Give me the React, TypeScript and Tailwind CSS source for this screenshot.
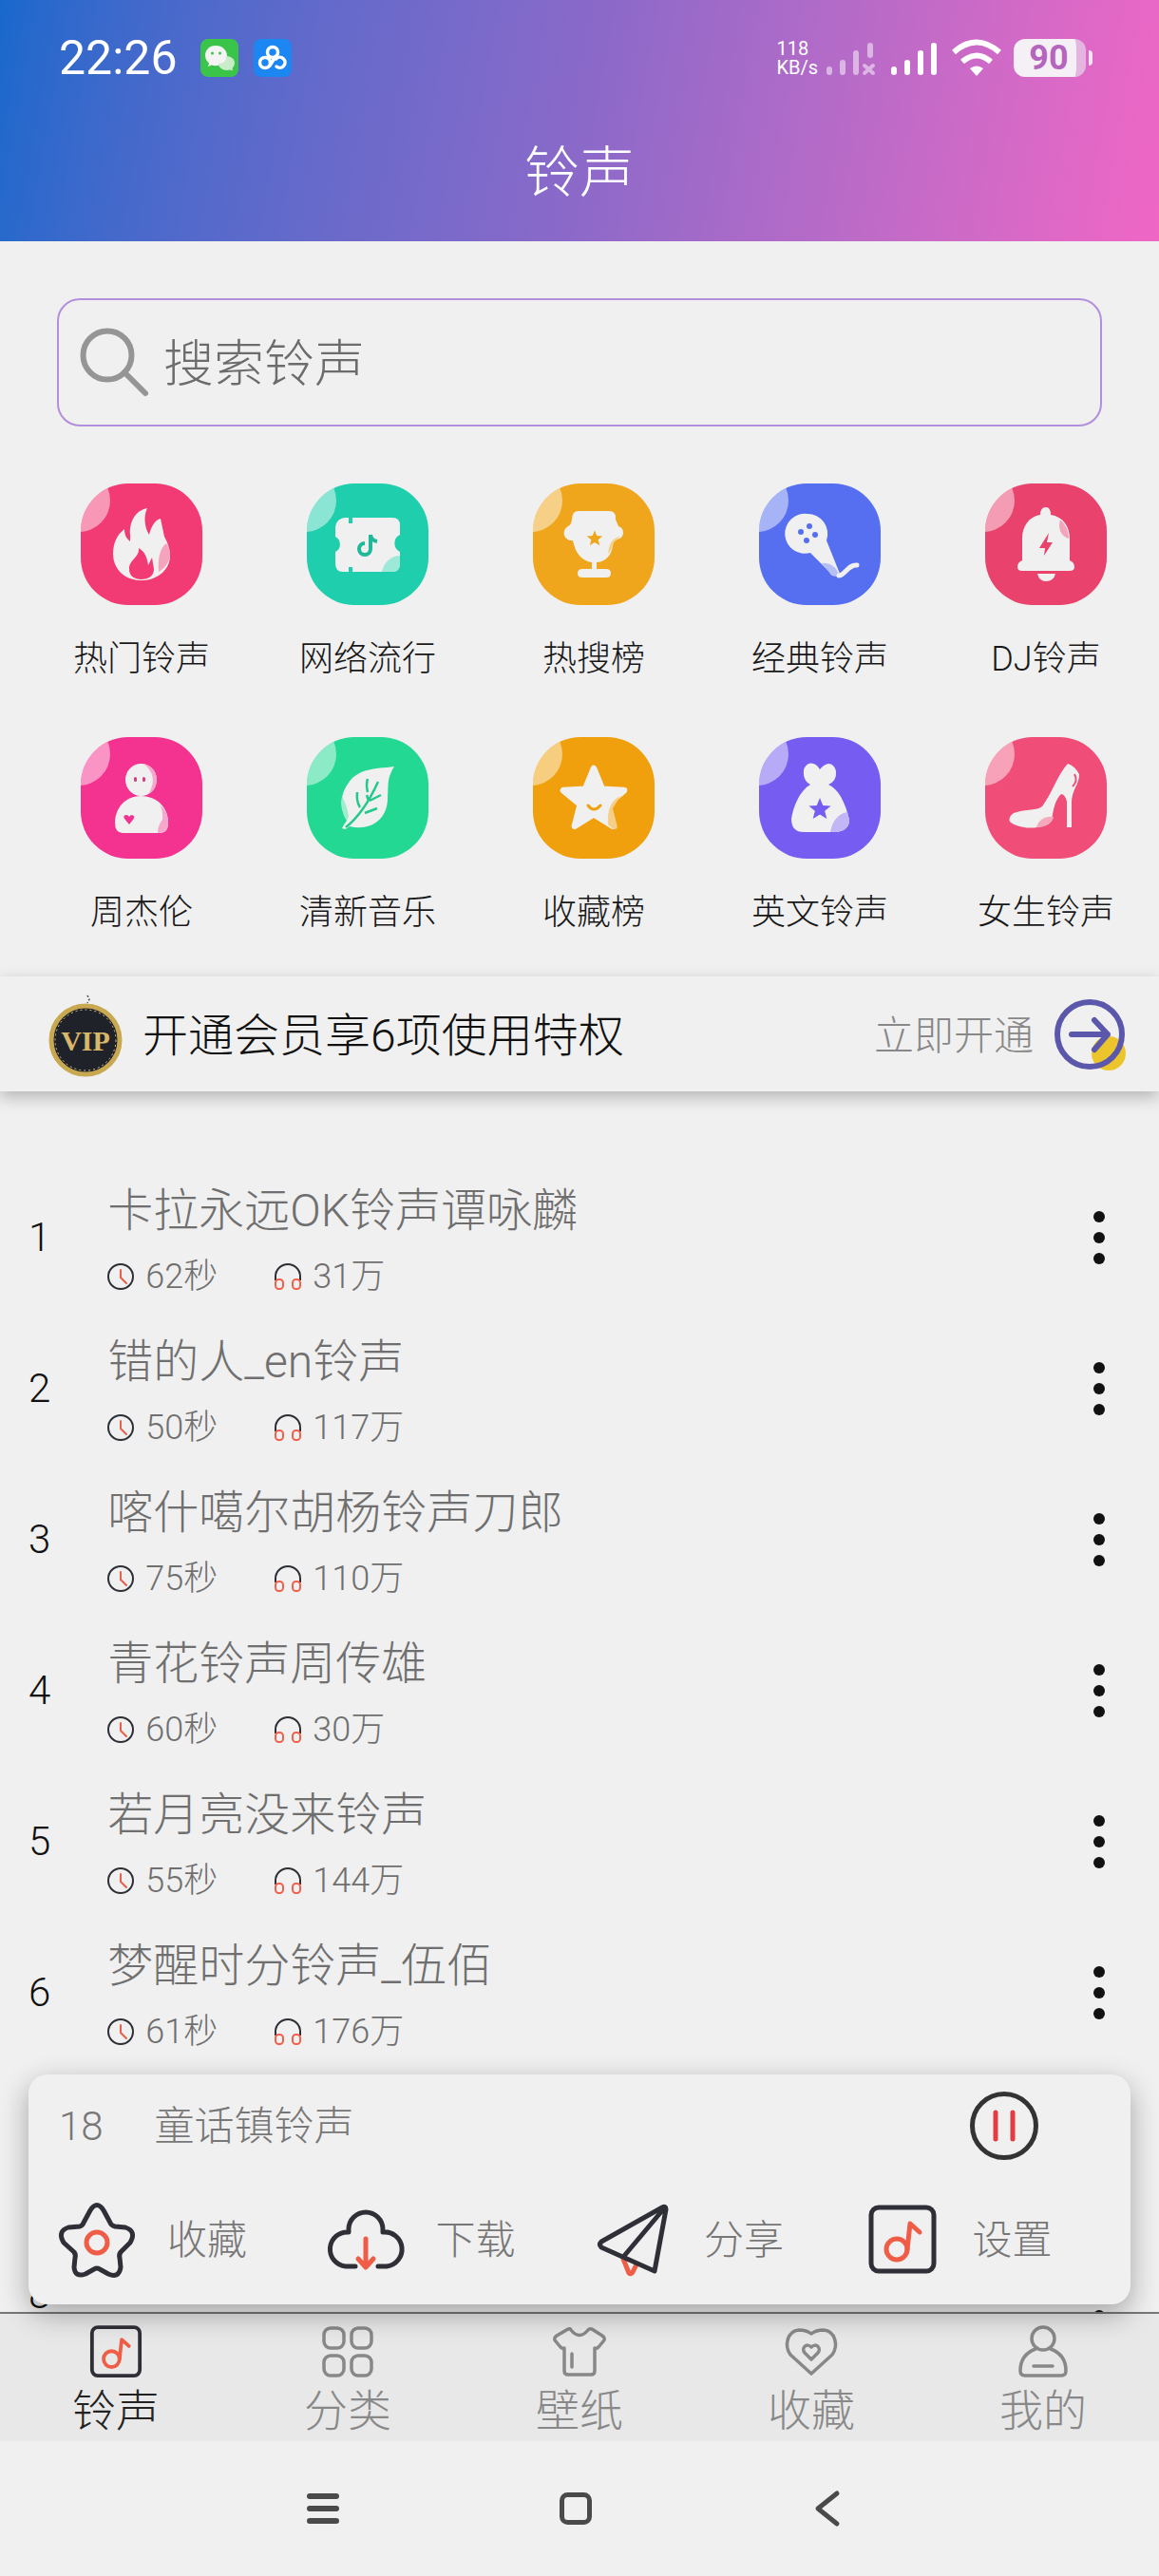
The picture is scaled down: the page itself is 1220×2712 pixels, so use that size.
import type { ReactNode } from "react";

type Category = {
  name: string;
  tile: string;
  art: ReactNode;
};

type Song = {
  id: number;
  title?: string;
  seconds?: string;
  plays?: string;
};

const FIVE_STAR =
  "M0 -10L2.7 -3.4L9.7 -3L4.3 1.5L6.1 8.4L0 4.6L-6.1 8.4L-4.3 1.5L-9.7 -3L-2.7 -3.4Z";

const categories: Category[] = [
  {
    name: "热门铃声",
    tile: "bg-[#f23a74]",
    art: (
      <>
        <path d="M70 26C58 28 51 40 52 54L52 61C48 58 46 54 46 48C38 54 34 63 34 74C34 88 44 101 62 102H66C82 101 94 90 94 76C94 70 92 63 88 56L84 37C78 38 74 46 72 54C67 46 66 34 70 26Z" fill="#f0f0f0" />
        <path d="M90 63C83 68 81 80 82 93C90 88 94 81 94 74C94 70 92 66 90 63Z" fill="#f6a3bd" />
        <path d="M61 68C62 78 51 80 51 90C51 96 54 100 63 101C72 101 77 97 77 90L75 78L71 86C70 79 68 72 61 68Z" fill="#f23a74" />
      </>
    ),
  },
  {
    name: "网络流行",
    tile: "bg-[#1fceac]",
    art: (
      <>
        <path d="M40 36H44V42H48V36H90Q98 36 98 44V54A10 10 0 0 0 98 72V84Q98 93 90 93H48V88H44V93H38Q30 93 30 84V72A9 9 0 0 0 30 56V46Q31 37 40 36Z" fill="#f0f0f0" />
        <path d="M98 76C90 76 81 82 79 93H90Q98 93 98 84Z" fill="#9ee8d8" />
        <path d="M67 54V69A6 6 0 1 1 61 63M67 54Q68 60 74 61" fill="none" stroke="#1fb898" strokeWidth="4" />
      </>
    ),
  },
  {
    name: "热搜榜",
    tile: "bg-[#f0a61c]",
    art: (
      <>
        <path d="M48 29H80Q88 29 87 38L90 45A7 7 0 0 1 91 58Q84 60 84 66C82 78 74 83 67 83V90H77Q82 90 82 94.500Q82 99 77 99H52Q47 99 47 94.500Q47 90 52 90H62V83C54 82 46 76 43 64L42 60A8 8 0 0 1 37 45Q40 44 41 38Q41 29 48 29Z" fill="#f0f0f0" />
        <path d="M92 56C84 57 80 63 79 74Q84 69 84 64Q86 60 92 56Z" fill="#f6d08a" />
        <path d={FIVE_STAR} transform="translate(65 58) scale(.85)" fill="#f0a61c" />
      </>
    ),
  },
  {
    name: "经典铃声",
    tile: "bg-[#566ef0]",
    art: (
      <>
        <path d="M51 32A21 21 0 0 1 71 60L85 95Q86 99 80 97Q76 98 74 93L54 73A21 21 0 1 1 51 32Z" fill="#f0f0f0" />
        <path d="M66 84C73 83 82 87 84 97Q79 99 76 96Z" fill="#b6bff5" />
        <path d="M84 97C90 97 94 85 103 86" fill="none" stroke="#f0f0f0" strokeWidth="5" strokeLinecap="round" />
        <g fill="#566ef0">
          <circle cx="53" cy="45" r="3" />
          <circle cx="44" cy="51" r="3" />
          <circle cx="59" cy="54" r="3" />
          <circle cx="50" cy="60" r="3" />
        </g>
      </>
    ),
  },
  {
    name: "DJ铃声",
    tile: "bg-[#e8426d]",
    art: (
      <>
        <path d="M64 25Q69 25 69 33C82 35 89 45 89 58V81Q94 83 94 88Q94 92 89 92H39Q34 92 34 88Q34 83 39 81V58C39 45 46 35 58 33Q58 25 64 25Z" fill="#f0f0f0" />
        <path d="M79 38C76 47 80 56 88 58Q88 46 79 38Z" fill="#f3a6ba" />
        <path d="M55 95H74Q72 103 64 103Q57 103 55 95Z" fill="#f0f0f0" />
        <path d="M67 52L57 68H63L62 76L71 62H65Z" fill="#e8426d" />
      </>
    ),
  },
  {
    name: "周杰伦",
    tile: "bg-[#f4328f]",
    art: (
      <>
        <ellipse cx="63.500" cy="45" rx="16.500" ry="17" fill="#f0f0f0" />
        <path d="M66 28Q80 32 80 46Q78 58 72 59Q82 40 66 28Z" fill="#f7a6cc" />
        <path d="M63 62C82 62 92 76 92 90Q92 101 84 101H44Q36 101 36 90C36 76 46 62 63 62Z" fill="#f0f0f0" />
        <path d="M83 71Q92 79 92 90Q92 101 81 101Q81 93 86 87Q87 78 83 71Z" fill="#f7a6cc" />
        <rect x="56" y="42" width="3" height="5" rx="1.500" fill="#d3407f" />
        <rect x="65" y="42" width="3" height="5" rx="1.500" fill="#d3407f" />
        <path d="M51 92L46 86Q44 82 48 82Q50 82 51 84Q52 82 54 82Q58 83 55 87Z" fill="#f4328f" />
      </>
    ),
  },
  {
    name: "清新音乐",
    tile: "bg-[#22d893]",
    art: (
      <>
        <path d="M92 31C78 33 54 32 44 48C35 60 34 74 42 88Q39 92 37 96L40 97Q43 96 45 94C66 99 84 88 85 66C86 50 84 44 92 31Z" fill="#f0f0f0" />
        <path d="M37 62Q34 75 42 88L44 84Q43 74 37 62Z" fill="#a0ecce" />
        <path d="M75 47Q60 80 41 95M65 67L63 61M66 67L78 61M61 80L74 75M56 74Q52 68 53 58M64 58Q62 50 64 44" fill="none" stroke="#22c98a" strokeWidth="2.500" />
      </>
    ),
  },
  {
    name: "收藏榜",
    tile: "bg-[#f0a00c]",
    art: (
      <>
        <path d={FIVE_STAR} transform="translate(64 66) scale(3.300)" fill="#f0f0f0" stroke="#f0f0f0" strokeWidth="2" strokeLinejoin="round" />
        <path d="M92 62C82 67 78 76 79 92Q86 100 89 95L84 75Z" fill="#f6d08a" />
        <path d="M58 72Q64 80 71 72" fill="none" stroke="#f0a00c" strokeWidth="3" strokeLinecap="round" />
      </>
    ),
  },
  {
    name: "英文铃声",
    tile: "bg-[#765cf0]",
    art: (
      <>
        <path d="M64 34Q59 26 52 28Q46 31 47 40Q48 47 54 50C42 57 36 74 34 86Q34 100 47 100H82Q95 98 95 87C92 74 86 56 73 50Q82 46 81 36Q79 28 73 28Q68 29 64 34Z" fill="#f0f0f0" />
        <path d="M93 79C84 80 77 88 75 100H82Q95 98 95 87Z" fill="#c3b6f6" />
        <path d={FIVE_STAR} transform="translate(64 76) scale(1.200)" fill="#765cf0" />
      </>
    ),
  },
  {
    name: "女生铃声",
    tile: "bg-[#f04e78]",
    art: (
      <>
        <path d="M87 28Q94 30 99 39Q99 46 95 53C92 60 91 64 91 70V95H86V68Q84 60 80 60C74 66 72 74 70 88Q66 94 55 95C42 97 30 93 26 89Q24 84 30 80C44 75 54 78 60 73C70 60 76 40 87 28Z" fill="#f0f0f0" />
        <path d="M54 95C56 88 62 83 72 84Q70 94 54 95Z" fill="#f6a9bd" />
        <path d="M94 39Q98 46 92 52" fill="none" stroke="#f04e78" strokeWidth="2" />
      </>
    ),
  },
];

const songs: Song[] = [
  { id: 1, title: "卡拉永远OK铃声谭咏麟", seconds: "62秒", plays: "31万" },
  { id: 2, title: "错的人_en铃声", seconds: "50秒", plays: "117万" },
  { id: 3, title: "喀什噶尔胡杨铃声刀郎", seconds: "75秒", plays: "110万" },
  { id: 4, title: "青花铃声周传雄", seconds: "60秒", plays: "30万" },
  { id: 5, title: "若月亮没来铃声", seconds: "55秒", plays: "144万" },
  { id: 6, title: "梦醒时分铃声_伍佰", seconds: "61秒", plays: "176万" },
  { id: 7 },
  { id: 8 },
];

const StatusBar = () => (
  <div className="flex items-center justify-between pt-8 pr-[70px] pl-[62px]">
    <div className="flex items-center">
      <span className="text-[50px] leading-[58px] font-normal">22:26</span>
      <svg className="ml-6 size-10" viewBox="0 0 40 40">
        <rect width="40" height="40" rx="8" fill="#3ac44a" />
        <path d="M16 7C9 7 5 12 5 17.500C5 21 7 24 9 25.500L8 29L12 27.500Q14 28.500 18 28C24 28 28 23 28 17.500S23 7 16 7Z" fill="#f4f4f4" />
        <path d="M27 18C33 18 36 22 36 25.500Q36 28.500 33.500 31L34 33.500L31 32.500C25 34 19 31 19 26Q28 26 27 18Z" fill="#c9ecc9" />
        <circle cx="12.500" cy="15" r="1.500" fill="#3ac44a" />
        <circle cx="20.500" cy="15" r="1.500" fill="#3ac44a" />
      </svg>
      <svg className="ml-4 size-10" viewBox="0 0 40 40" fill="none" stroke="#fff" strokeWidth="3.500" strokeLinecap="round">
        <rect width="40" height="40" rx="8" fill="#1c86f2" stroke="none" />
        <circle cx="20" cy="14" r="5.500" />
        <circle cx="12" cy="25" r="5.500" />
        <path d="M23.500 18L17 28M23.500 21A5.500 5.500 0 1 1 24 29" />
      </svg>
    </div>
    <div className="flex items-center">
      <div className="text-[20px] leading-5 font-normal">
        <div>118</div>
        <div>KB/s</div>
      </div>
      <svg className="ml-2 h-10 w-14" viewBox="0 0 56 40" stroke="#fff" strokeOpacity=".5" strokeWidth="6" strokeLinecap="round">
        <path d="M4 35V32M18 35V25M32 35V15M47 17V7" />
        <path d="M41 28L50 36M50 28L41 36" strokeWidth="4" />
      </svg>
      <svg className="ml-3 h-10 w-14" viewBox="0 0 56 40" stroke="#fff" strokeWidth="6" strokeLinecap="round">
        <path d="M4 35V32M18 35V25M32 35V15M46 35V7" />
      </svg>
      <svg className="ml-2 h-10 w-[54px]" viewBox="0 0 54 40" fill="none" stroke="#fff" strokeWidth="6">
        <path d="M3 14Q27 -7 51 14" />
        <path d="M12 24Q27 11 42 24" />
        <path d="M20 31Q27 26 34 31L28 38Q27 39 26 38Z" fill="#fff" stroke="none" />
      </svg>
      <div className="ml-3 flex h-10 w-[76px] items-center justify-center rounded-xl border-r-10 border-[#e5b5e2] bg-[#f5f0f5] pl-2 text-[36px] font-bold text-[#b565bd]">
        90
      </div>
      <div className="ml-[3px] h-4 w-1 rounded-r bg-[#f6e4f3]" />
    </div>
  </div>
);

const CategoryTile = ({ category }: { category: Category }) => (
  <a href="#" className="flex flex-col items-center">
    <div className={`size-32 overflow-hidden rounded-[50px] ${category.tile}`}>
      <svg className="size-32" viewBox="0 0 128 128">
        <circle cx="-2" cy="18" r="33" fill="#fff" opacity=".48" />
        {category.art}
      </svg>
    </div>
    <span className="mt-[30px] text-[36px] leading-[54px] whitespace-nowrap text-[#181818]">{category.name}</span>
  </a>
);

const ClockIcon = () => (
  <svg className="size-7" viewBox="0 0 28 28" fill="none" strokeWidth="2" strokeLinecap="round">
    <circle cx="14" cy="14" r="13" stroke="#2c2f36" />
    <path d="M14 7V15L20 21" stroke="#e8604c" />
  </svg>
);

const HeadphonesIcon = () => (
  <svg className="size-7" viewBox="0 0 28 28" fill="none" strokeWidth="2">
    <path d="M1 18V14A13 13 0 0 1 27 14V18" stroke="#2c2f36" />
    <rect x="1" y="17" width="8" height="10" rx="3.500" stroke="#f0604c" />
    <rect x="19" y="17" width="8" height="10" rx="3.500" stroke="#f0604c" />
  </svg>
);

const SongRow = ({ song }: { song: Song }) => (
  <li className="flex h-[159px] items-center pr-11 pl-[30px]">
    <span className="text-[42px] leading-[50px] text-[#111]">{song.id}</span>
    <div className="ml-[60px] flex-1 pt-1 text-[#6f6f6f]">
      {song.title && (
        <>
          <div className="text-[48px] leading-[72px]">{song.title}</div>
          <div className="mt-1.5 flex items-center text-[36px] leading-[54px]">
            <ClockIcon />
            <span className="ml-3">{song.seconds}</span>
            <span className="ml-[60px]">
              <HeadphonesIcon />
            </span>
            <span className="ml-3">{song.plays}</span>
          </div>
        </>
      )}
    </div>
    <button type="button" aria-label="更多" className="flex flex-col items-center gap-2.5 px-[13px]">
      <span className="size-3 rounded-full bg-[#111]" />
      <span className="size-3 rounded-full bg-[#111]" />
      <span className="size-3 rounded-full bg-[#111]" />
    </button>
  </li>
);

const NoteIcon = ({ className }: { className: string }) => (
  <svg className={className} viewBox="0 0 84 84" fill="none" strokeWidth="5" strokeLinecap="round" strokeLinejoin="round">
    <rect x="9" y="8" width="66" height="67" rx="8" stroke="#2f2f37" />
    <circle cx="36" cy="52" r="11" stroke="#ef5d46" />
    <path d="M47 52L50 25L60 34" stroke="#ef5d46" />
  </svg>
);

const actions: { name: string; icon: ReactNode }[] = [
  {
    name: "收藏",
    icon: (
      <svg className="size-[84px]" viewBox="0 0 84 84" fill="none" strokeWidth="5" strokeLinejoin="round">
        <path d="M35 11Q42 0 49 11L56 24Q57 27 61 28L72 29Q84 33 77 45L67 55Q65 58 66 61L67 71Q65 83 54 78L45 73Q42 71 39 73L30 78Q19 82 18 71L19 61Q20 58 18 55L7 45Q0 33 12 29L24 28Q27 27 28 24Z" stroke="#2f2f37" />
        <circle cx="42" cy="45" r="11" stroke="#ef5d46" />
      </svg>
    ),
  },
  {
    name: "下载",
    icon: (
      <svg className="size-[84px]" viewBox="0 0 84 84" fill="none" strokeWidth="5" strokeLinecap="round" strokeLinejoin="round">
        <path d="M31 70H21A18 18 0 0 1 24 34V31A18 18 0 0 1 60 31V34A18 18 0 0 1 64 70H55" stroke="#2f2f37" />
        <path d="M42 41V70M34 62L42 71L50 62" stroke="#ef5d46" />
      </svg>
    ),
  },
  {
    name: "分享",
    icon: (
      <svg className="size-[84px]" viewBox="0 0 84 84" fill="none" strokeWidth="5" strokeLinecap="round" strokeLinejoin="round">
        <path d="M31 62L37 77Q39 79 41 76L45 68" stroke="#ef5d46" />
        <path d="M72 8L8 44Q5 47 8 50L64 75L76 10Q76 6 72 8ZM74 9L32 59" stroke="#2f2f37" />
      </svg>
    ),
  },
  { name: "设置", icon: <NoteIcon className="size-[84px]" /> },
];

const Player = () => (
  <section className="absolute inset-x-[30px] bottom-2 z-10 rounded-[20px] bg-[#f0f0f0] pt-3 pb-[26px] text-[42px] text-[#777] shadow-[0_10px_30px_rgba(0,0,0,0.32)]">
    <div className="flex h-[84px] items-center pr-[96px] pl-8">
      <span>18</span>
      <span className="ml-[54px] flex-1">童话镇铃声</span>
      <button type="button" aria-label="暂停">
        <svg className="size-[74px]" viewBox="0 0 74 74" fill="none" strokeWidth="5" strokeLinecap="round">
          <circle cx="37" cy="37" r="33.500" stroke="#333" />
          <path d="M28 23V51M46 23V51" stroke="#e23c44" />
        </svg>
      </button>
    </div>
    <div className="mt-9 grid grid-cols-4 pl-[30px]">
      {actions.map((action) => (
        <button key={action.name} type="button" className="flex items-center gap-8">
          {action.icon}
          <span>{action.name}</span>
        </button>
      ))}
    </div>
  </section>
);

const tabs: { name: string; icon: ReactNode }[] = [
  { name: "铃声", icon: <NoteIcon className="size-16" /> },
  {
    name: "分类",
    icon: (
      <>
        <rect x="7" y="7" width="21" height="21" rx="7" />
        <rect x="36" y="7" width="21" height="21" rx="7" />
        <rect x="7" y="36" width="21" height="21" rx="7" />
        <rect x="36" y="36" width="21" height="21" rx="7" />
      </>
    ),
  },
  {
    name: "壁纸",
    icon: (
      <>
        <path d="M20 8Q22 7 23 9Q32 20 41 9Q43 7 45 8L56 15Q60 18 57 21L52 27Q50 29 48 28V52Q48 56 44 56H20Q16 56 16 52V28Q14 29 12 27L7 21Q4 18 8 15Z" />
        <path d="M24 34V48" />
      </>
    ),
  },
  {
    name: "收藏",
    icon: (
      <>
        <path d="M32 55L10 35C3 25 7 10 19 9Q27 9 32 13Q37 9 45 9C57 10 61 25 54 35Z" />
        <path d="M32 40L25 33C21 28 27 22 32 27C37 22 43 28 39 33Z" />
      </>
    ),
  },
  {
    name: "我的",
    icon: (
      <>
        <circle cx="32" cy="18" r="12" />
        <path d="M24 29Q8 35 8 52Q8 57 13 57H51Q56 57 56 52Q56 35 40 29M22 47H42" />
      </>
    ),
  },
];

const TabBar = () => (
  <nav className="grid grid-cols-5 border-t-2 border-[#777] bg-[#e8e8e8] pt-2 pb-0.5">
    {tabs.map((tab, index) => (
      <a
        key={tab.name}
        href="#"
        className={`flex flex-col items-center text-[46px] leading-[60px] ${index === 0 ? "text-[#222]" : "text-[#888]"}`}
      >
        {index === 0 ? (
          tab.icon
        ) : (
          <svg className="size-16" viewBox="0 0 64 64" fill="none" stroke="currentColor" strokeWidth="3.500" strokeLinecap="round" strokeLinejoin="round">
            {tab.icon}
          </svg>
        )}
        {tab.name}
      </a>
    ))}
  </nav>
);

const SystemBar = () => (
  <div className="flex h-[142px] items-center justify-center gap-[226px] bg-[#f0f0f0] pr-2">
    <button type="button" aria-label="任务">
      <svg className="size-10" viewBox="0 0 40 40" stroke="#4a4a4a" strokeWidth="6" strokeLinecap="round">
        <path d="M6 7H34M6 20H34M6 33H34" />
      </svg>
    </button>
    <button type="button" aria-label="主页">
      <svg className="size-10" viewBox="0 0 40 40" fill="none" stroke="#4a4a4a" strokeWidth="5">
        <rect x="5.500" y="5.500" width="29" height="29" rx="6" />
      </svg>
    </button>
    <button type="button" aria-label="返回">
      <svg className="size-10" viewBox="0 0 40 40" fill="none" stroke="#4a4a4a" strokeWidth="5" strokeLinecap="round" strokeLinejoin="round">
        <path d="M29 4L9 20L29 36" />
      </svg>
    </button>
  </div>
);

const App = () => {
  return (
    <div className="flex h-screen flex-col bg-[#f0f0f0] font-[Roboto,'Noto_Sans_CJK_SC',sans-serif] font-light">
      <header className="h-[254px] bg-linear-100 from-[#1768cc] via-[#8a69c9] to-[#f066c5] text-white">
        <StatusBar />
        <h1 className="mt-[50px] text-center text-[58px] leading-[84px]">铃声</h1>
      </header>

      <div className="relative min-h-0 flex-1">
        <main className="h-full overflow-hidden">
          <label className="mx-[60px] mt-[60px] flex h-[135px] items-center rounded-3xl border-2 border-[#b18fdc] pl-[22px]">
            <svg className="size-[74px]" viewBox="0 0 74 74" fill="none" stroke="#959595" strokeWidth="6" strokeLinecap="round">
              <circle cx="29" cy="29" r="25.500" />
              <path d="M47 47L69 69" />
            </svg>
            <input
              type="text"
              aria-label="搜索铃声"
              placeholder="搜索铃声"
              className="ml-3.5 min-w-0 flex-1 pt-1 text-[53px] leading-[80px] outline-none placeholder:text-[#6c6c6c]"
            />
          </label>

          <div className="mt-[60px] grid grid-cols-5 gap-y-[55px] pl-[30px]">
            {categories.map((category) => (
              <CategoryTile key={category.name} category={category} />
            ))}
          </div>

          <a href="#" className="mt-10 flex h-[121px] items-center pt-1 pr-[34px] pl-[50px] text-[48px] shadow-[0_6px_16px_rgba(0,0,0,0.25)]">
            <svg className="h-[90px] w-20" viewBox="0 0 80 90">
              <circle cx="40" cy="49" r="36" fill="#20222a" stroke="#c8a850" strokeWidth="5" />
              <circle cx="40" cy="49" r="32" fill="none" stroke="#d8c48c" strokeWidth="1" strokeDasharray="2 3" />
              <path d="M42 2L44 6L42 10" fill="none" stroke="#444" strokeWidth="1.500" strokeDasharray="2 2" />
              <text x="40" y="60" textAnchor="middle" fontSize="30" fontWeight="700" fontFamily="Liberation Serif, serif" fill="#d8b868">
                VIP
              </text>
            </svg>
            <span className="ml-5 flex-1 text-[#111]">开通会员享6项使用特权</span>
            <span className="text-[42px] text-[#888]">立即开通</span>
            <svg className="ml-[18px] size-20" viewBox="0 0 80 80" fill="none" strokeWidth="6" strokeLinecap="round" strokeLinejoin="round">
              <circle cx="61" cy="58" r="18" fill="#ecc42c" />
              <circle cx="41" cy="38" r="34" stroke="#5b58ab" />
              <path d="M22 38H60M46 23L60 38L46 54" stroke="#5b58ab" />
            </svg>
          </a>

          <ul className="mt-[74px]">
            {songs.map((song) => (
              <SongRow key={song.id} song={song} />
            ))}
          </ul>
        </main>

        <Player />
      </div>

      <TabBar />
      <SystemBar />
    </div>
  );
};

export default App;
